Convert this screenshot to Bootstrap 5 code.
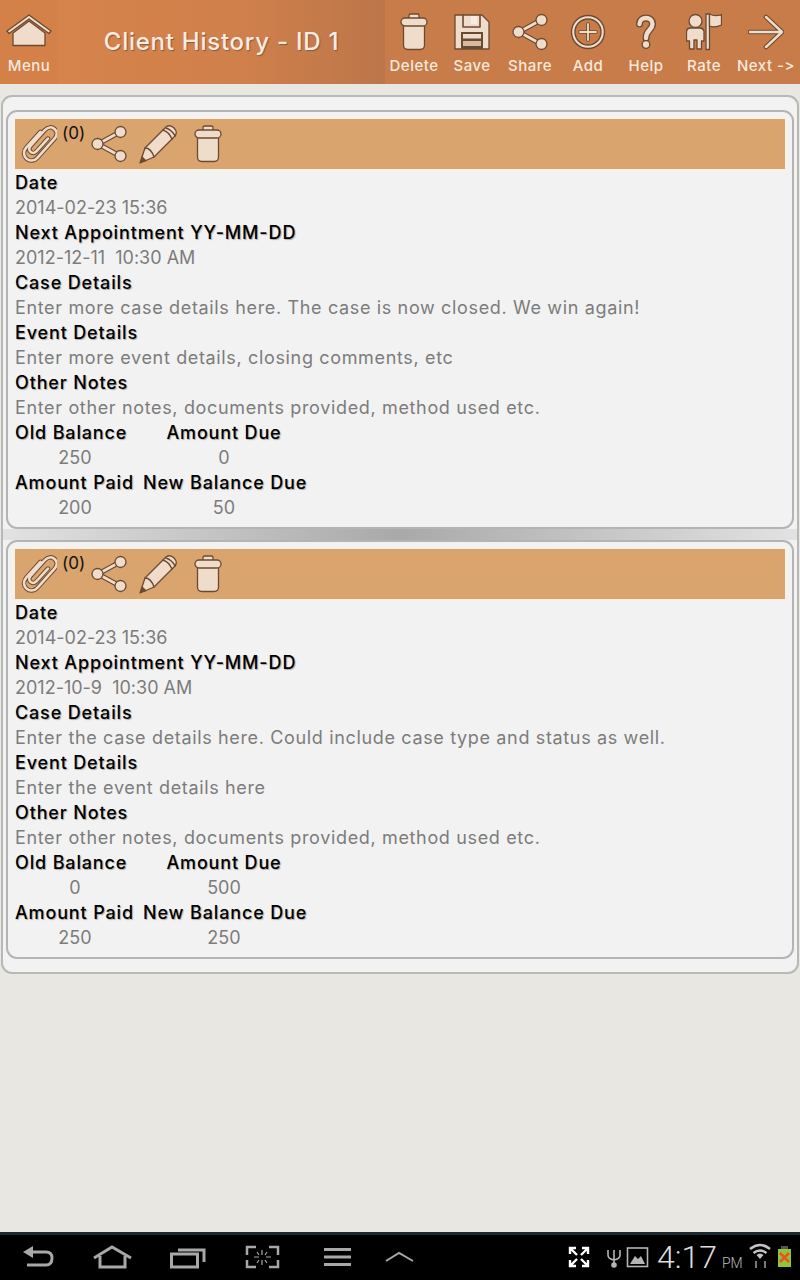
<!DOCTYPE html>
<html lang="en">
<head>
  <meta charset="UTF-8">
  <meta name="viewport" content="width=device-width, initial-scale=1">
  <title>Client History - ID 1</title>
  <link href="https://cdn.jsdelivr.net/npm/bootstrap@5.3.0/dist/css/bootstrap.min.css" rel="stylesheet">
  <style>
    body {
      width: 800px;
      height: 1280px;
      overflow: hidden;
      background: #e9e7e1;
      font-family: Inter, "Liberation Sans", sans-serif;
      font-variant-ligatures: none;
      font-feature-settings: "calt" 0;
    }
    .top-bar { height: 84px; background: #c87c49; color: #f6e9de; }
    .menu-cell { background: #d38049; }
    .title-cell {
      width: 327px;
      background: linear-gradient(90deg, #d6834c, #d0804b 55%, #bc764a);
      font-size: 24px;
      font-weight: 500;
      letter-spacing: .75px;
      color: #f7ece3;
      text-shadow: 1px 1px 1px #8a5a38;
    }
    .tool-cell { width: 58px; height: 84px; }
    .tool-cell.wide-cell { width: 66px; }
    .tool-icon { height: 38px; margin-top: 13px; }
    .tool-label { font-size: 15px; font-weight: 500; letter-spacing: .5px; line-height: 18px; margin-top: 6px; white-space: nowrap; }
    .ic-line { fill: #f0dccb; stroke: #6b4a33; stroke-width: 1.3; stroke-linejoin: round; stroke-linecap: round; }
    .ic-dark { fill: none; stroke: #6b4a33; stroke-linecap: round; stroke-linejoin: round; }
    .ic-light { fill: none; stroke: #f0dccb; stroke-linecap: round; stroke-linejoin: round; }

    .outer-box {
      margin: 11px 1px 0;
      height: 879px;
      padding: 13px 3px 13px;
      background: #f2f2f2;
      border: 2px solid #b8b8b6;
      border-radius: 11px;
    }
    .entry-box {
      height: 419px;
      padding: 7px 7px 0;
      border: 2px solid #b4b4b4;
      border-radius: 11px;
    }
    .entry-gap {
      height: 11px;
      margin: 0 -3px;
      background: linear-gradient(90deg, #e2e2e2, #a9a9a9 50%, #e2e2e2);
    }
    .entry-bar {
      height: 50px;
      background: #d9a46d;
      outline: 2px solid #faf1e8;
      margin-bottom: 1px;
    }
    .clip-icon { margin-left: 6px; }
    .clip-count { width: 33px; padding-left: 5px; font-size: 17px; line-height: 20px; color: #111; }
    .pencil-icon { margin-left: 11px; }
    .bin-icon { margin-left: 15px; }
    .f-label, .f-value { height: 25px; line-height: 25px; font-size: 18px; white-space: pre; }
    .f-label { color: #000; font-weight: 500; letter-spacing: .85px; text-shadow: 1px 1px 1px #a8a8a8; }
    .f-value { color: #7c7c7c; letter-spacing: .65px; }
    .f-value.f-date { letter-spacing: 0; }
    .money-grid { grid-template-columns: 120px 162px; column-gap: 8px; }
    .nav-bar {
      height: 48px;
      background: #000;
      border-top: 3px solid #1b2a30;
      color: #a5a5a5;
    }
    .sys-icon { position: absolute; top: 0; }
    .clock-text { left: 657px; top: 0; font-family: Roboto, sans-serif; font-weight: 300; font-size: 32px; line-height: 44px; color: #ddd; }
    .clock-pm { font-family: Roboto, sans-serif; font-size: 14px; color: #bbb; margin-left: 5px; }
  </style>
</head>
<body class="d-flex flex-column">
  <svg width="0" height="0" class="position-absolute">
    <symbol id="i-bin" viewBox="0 0 28 38">
      <rect class="ic-line" x="9" y="1" width="10" height="6" rx="1.5"/>
      <path class="ic-line" d="M3.5 12 H24.5 V32 Q24.5 36.500 20 36.500 H8 Q3.5 36.500 3.5 32 Z"/>
      <rect class="ic-line" x="1" y="5" width="26" height="8" rx="4"/>
    </symbol>
    <symbol id="i-share" viewBox="0 0 38 38">
      <path class="ic-dark" stroke-width="5" d="M8 19 L30 7 M8 19 L30 31"/>
      <path class="ic-light" stroke-width="2.6" d="M8 19 L30 7 M8 19 L30 31"/>
      <circle class="ic-line" cx="7.5" cy="19" r="5.5"/>
      <circle class="ic-line" cx="30.5" cy="7" r="5.5"/>
      <circle class="ic-line" cx="30.5" cy="31" r="5.5"/>
    </symbol>
    <symbol id="i-clip" viewBox="0 0 36 40">
      <g transform="rotate(42 18 20)">
        <path class="ic-dark" stroke-width="4.6" d="M11 10 V31 C11 42 26 42 26 31 V6 C26 -4 13 -4 13 6 V27 C13 33 21 33 21 27 V10"/>
        <path class="ic-light" stroke-width="2.6" d="M11 10 V31 C11 42 26 42 26 31 V6 C26 -4 13 -4 13 6 V27 C13 33 21 33 21 27 V10"/>
      </g>
    </symbol>
    <symbol id="i-pencil" viewBox="0 0 40 40">
      <path class="ic-line" d="M1 39 L6 24 L27 3 Q31 0 35 4 Q39 8 36 12 L15 33 Z"/>
      <path class="ic-dark" stroke-width="1.4" d="M6 24 Q12 24 15 33 M24 6 Q30 8 33 15 M27 4 Q33 6 36 12"/>
      <path d="M1 39 L3 32 L8 37 Z" fill="#6b4a33"/>
    </symbol>
  </svg>

  <header class="top-bar d-flex flex-shrink-0">
    <div class="tool-cell menu-cell text-center">
      <svg class="tool-icon d-block mx-auto" width="46" height="38" viewBox="0 0 46 38">
        <path class="ic-line" d="M7 20 L23 8 L39 20 V32.5 H7 Z"/>
        <path class="ic-line" d="M1 18 L23 2 L45 18 L43 20.5 L23 6 L3 20.5 Z"/>
      </svg>
      <div class="tool-label">Menu</div>
    </div>
    <div class="title-cell d-flex align-items-center justify-content-center">Client History - ID 1</div>

    <div class="tool-cell text-center">
      <svg class="tool-icon d-block mx-auto" width="28" height="38"><use href="#i-bin"/></svg>
      <div class="tool-label">Delete</div>
    </div>
    <div class="tool-cell text-center">
      <svg class="tool-icon d-block mx-auto" width="36" height="38" viewBox="0 0 36 38">
        <path class="ic-line" d="M1 2 H28 L35 9 V36 H1 Z"/>
        <path class="ic-dark" stroke-width="1.6" d="M9 2 V14 H26 V2"/>
        <rect x="17" y="3" width="6" height="8" fill="#f7ece3"/>
        <rect x="7" y="19" width="22" height="17" fill="#6b4a33"/>
        <rect x="9" y="21" width="18" height="4.500" fill="#f0dccb"/>
        <rect x="9" y="28" width="18" height="5" fill="#d9b8a0"/>
      </svg>
      <div class="tool-label">Save</div>
    </div>
    <div class="tool-cell text-center">
      <svg class="tool-icon d-block mx-auto" width="38" height="38"><use href="#i-share"/></svg>
      <div class="tool-label">Share</div>
    </div>
    <div class="tool-cell text-center">
      <svg class="tool-icon d-block mx-auto" width="36" height="38" viewBox="0 0 36 38">
        <circle cx="18" cy="19" r="16.5" fill="#f0dccb" stroke="#6b4a33" stroke-width="1.4"/>
        <circle cx="18" cy="19" r="13" fill="#c87c49" stroke="#6b4a33" stroke-width="1.4"/>
        <path class="ic-dark" stroke-width="3.6" d="M18 11 V27 M10 19 H26"/>
        <path class="ic-light" stroke-width="1.8" d="M18 11 V27 M10 19 H26"/>
      </svg>
      <div class="tool-label">Add</div>
    </div>
    <div class="tool-cell text-center">
      <svg class="tool-icon d-block mx-auto" width="26" height="38" viewBox="0 0 26 38">
        <path class="ic-dark" stroke-width="7" stroke-linecap="butt" d="M6.5 11 C6.5 3 19.5 3 19.5 11 C19.5 17 13 17 13 25"/>
        <path class="ic-light" stroke-width="4.4" stroke-linecap="butt" d="M6.5 11 C6.5 3 19.5 3 19.5 11 C19.5 17 13 17 13 25"/>
        <circle class="ic-line" cx="13" cy="31.500" r="3.8"/>
      </svg>
      <div class="tool-label">Help</div>
    </div>
    <div class="tool-cell text-center">
      <svg class="tool-icon d-block mx-auto" width="36" height="38" viewBox="0 0 36 38">
        <circle class="ic-line" cx="9.5" cy="8" r="6.5"/>
        <path class="ic-line" d="M0.5 19 Q0.5 15 5 15 H14 Q17 15 18 18 L18 28 H15.5 V36 H11 V27 H8 V36 H3.500 V28 H0.5 Z"/>
        <rect class="ic-line" x="20" y="1" width="3.500" height="35.500"/>
        <path class="ic-line" d="M23.500 1 Q29 4 35.500 1.500 V12 Q29 15 23.500 13 Z"/>
      </svg>
      <div class="tool-label">Rate</div>
    </div>
    <div class="tool-cell wide-cell text-center">
      <svg class="tool-icon d-block mx-auto" width="36" height="38" viewBox="0 0 36 38">
        <path class="ic-dark" stroke-width="4.6" d="M2 19 H33 M18 4 L34 19 L18 34"/>
        <path class="ic-light" stroke-width="2.4" d="M2 19 H33 M18 4 L34 19 L18 34"/>
      </svg>
      <div class="tool-label">Next -&gt;</div>
    </div>
  </header>

  <main class="flex-grow-1">
    <div class="outer-box">
      <section class="entry-box">
        <div class="entry-bar d-flex align-items-center">
          <svg class="clip-icon" width="36" height="40"><use href="#i-clip"/></svg>
          <div class="clip-count align-self-start mt-1">(0)</div>
          <svg width="38" height="38"><use href="#i-share"/></svg>
          <svg class="pencil-icon" width="40" height="40"><use href="#i-pencil"/></svg>
          <svg class="bin-icon" width="28" height="38"><use href="#i-bin"/></svg>
        </div>
        <div class="f-label">Date</div>
        <div class="f-value f-date">2014-02-23 15:36</div>
        <div class="f-label">Next Appointment YY-MM-DD</div>
        <div class="f-value f-date">2012-12-11  10:30 AM</div>
        <div class="f-label">Case Details</div>
        <div class="f-value">Enter more case details here. The case is now closed. We win again!</div>
        <div class="f-label">Event Details</div>
        <div class="f-value">Enter more event details, closing comments, etc</div>
        <div class="f-label">Other Notes</div>
        <div class="f-value">Enter other notes, documents provided, method used etc.</div>
        <div class="d-grid money-grid">
          <div class="f-label">Old Balance</div><div class="f-label text-center">Amount Due</div>
          <div class="f-value f-date text-center">250</div><div class="f-value f-date text-center">0</div>
          <div class="f-label">Amount Paid</div><div class="f-label text-center">New Balance Due</div>
          <div class="f-value f-date text-center">200</div><div class="f-value f-date text-center">50</div>
        </div>
      </section>
      <div class="entry-gap"></div>
      <section class="entry-box">
        <div class="entry-bar d-flex align-items-center">
          <svg class="clip-icon" width="36" height="40"><use href="#i-clip"/></svg>
          <div class="clip-count align-self-start mt-1">(0)</div>
          <svg width="38" height="38"><use href="#i-share"/></svg>
          <svg class="pencil-icon" width="40" height="40"><use href="#i-pencil"/></svg>
          <svg class="bin-icon" width="28" height="38"><use href="#i-bin"/></svg>
        </div>
        <div class="f-label">Date</div>
        <div class="f-value f-date">2014-02-23 15:36</div>
        <div class="f-label">Next Appointment YY-MM-DD</div>
        <div class="f-value f-date">2012-10-9  10:30 AM</div>
        <div class="f-label">Case Details</div>
        <div class="f-value">Enter the case details here. Could include case type and status as well.</div>
        <div class="f-label">Event Details</div>
        <div class="f-value">Enter the event details here</div>
        <div class="f-label">Other Notes</div>
        <div class="f-value">Enter other notes, documents provided, method used etc.</div>
        <div class="d-grid money-grid">
          <div class="f-label">Old Balance</div><div class="f-label text-center">Amount Due</div>
          <div class="f-value f-date text-center">0</div><div class="f-value f-date text-center">500</div>
          <div class="f-label">Amount Paid</div><div class="f-label text-center">New Balance Due</div>
          <div class="f-value f-date text-center">250</div><div class="f-value f-date text-center">250</div>
        </div>
      </section>
    </div>
  </main>

  <footer class="nav-bar d-flex align-items-center flex-shrink-0 position-relative">
    <svg class="sys-icon start-0" width="800" height="45" viewBox="0 1235 800 45" fill="none" stroke="#a8a8a8" stroke-width="3">
      <path d="M30 1252 H46 Q52 1252 52 1258 Q52 1265 46 1265 H27"/>
      <path d="M23 1252 L33 1246 V1258 Z" fill="#a8a8a8" stroke="none"/>
      <path d="M94 1258 L112 1247 L131 1258"/>
      <path d="M100 1256 V1267 H125 V1256"/>
      <rect x="171.500" y="1254" width="26" height="13"/>
      <path d="M178 1250 H204 V1262"/>
      <path stroke-width="2.5" d="M247 1255 V1247 H256 M269 1247 H278 V1255 M278 1260 V1267 H269 M256 1267 H247 V1260"/>
      <path stroke-width="1.2" d="M262 1250 V1255 M262 1260 V1265 M254 1257 H259 M266 1257 H271 M257 1252 L259 1255 M267 1252 L265 1255 M257 1263 L259 1260 M267 1263 L265 1260"/>
      <path d="M324 1249.500 H351 M324 1257 H351 M324 1264.500 H351"/>
      <path stroke-width="2" d="M386 1261 L399 1253 L413 1261"/>
      <g stroke="#fff" stroke-width="2.4">
        <path d="M570 1254 V1248 H576 M571 1249 L577 1255 M588 1254 V1248 H582 M587 1249 L581 1255 M570 1260 V1266 H576 M571 1265 L577 1259 M588 1260 V1266 H582 M587 1265 L581 1259"/>
      </g>
      <g stroke="#b5b5b5" stroke-width="1.6">
        <path d="M614 1250 V1265 M608 1250 V1255 Q608 1259 614 1260 Q620 1259 620 1255 V1250"/>
        <circle cx="614" cy="1265" r="2" fill="#b5b5b5"/>
        <rect x="627.500" y="1248" width="20" height="18.500"/>
        <path d="M630 1264 L635 1256 L638 1259 L641 1256 L645 1264 Z" fill="#b5b5b5" stroke="none"/>
      </g>
      <g stroke="#c4c4c4" stroke-width="2.6">
        <path d="M750 1249 Q760 1241 770 1249 M753.500 1253 Q760 1248 766.500 1253"/>
        <path fill="#c4c4c4" stroke="none" d="M756.500 1255 Q760 1252 763.500 1255 L760 1259 Z"/>
        <path stroke="#777" stroke-width="2" d="M756 1261 V1268 M765 1268 V1261"/>
      </g>
      <rect x="778" y="1249" width="13" height="18" fill="#8fc43c" stroke="none"/>
      <rect x="781" y="1246" width="7" height="3" fill="#555" stroke="none"/>
      <path stroke="#e8561f" stroke-width="2.6" d="M780 1253 L789 1262 M789 1253 L780 1262"/>
    </svg>
    <div class="clock-text position-absolute d-flex align-items-baseline">4:17<span class="clock-pm">PM</span></div>
  </footer>
</body>
</html>
